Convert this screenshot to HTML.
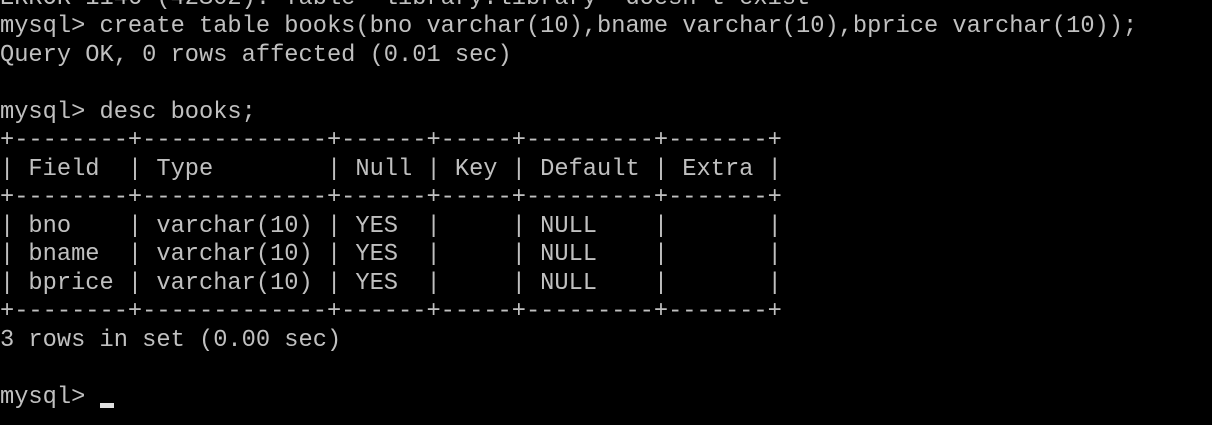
<!DOCTYPE html>
<html><head><meta charset="utf-8"><style>
html,body{margin:0;padding:0;background:#000;width:1212px;height:425px;overflow:hidden}
pre{position:absolute;left:0;top:-15.5px;margin:0;font-family:"Liberation Mono",monospace;font-size:23.7px;line-height:28.5px;color:#c0c0c0;white-space:pre}
.cur{position:absolute;left:100px;top:403px;width:14px;height:5px;background:#e0e0e0}
</style></head><body>
<pre>ERROR 1146 (42S02): Table 'library.library' doesn't exist
mysql> create table books(bno varchar(10),bname varchar(10),bprice varchar(10));
Query OK, 0 rows affected (0.01 sec)

mysql> desc books;
+--------+-------------+------+-----+---------+-------+
| Field  | Type        | Null | Key | Default | Extra |
+--------+-------------+------+-----+---------+-------+
| bno    | varchar(10) | YES  |     | NULL    |       |
| bname  | varchar(10) | YES  |     | NULL    |       |
| bprice | varchar(10) | YES  |     | NULL    |       |
+--------+-------------+------+-----+---------+-------+
3 rows in set (0.00 sec)

mysql> </pre>
<div class="cur"></div>
</body></html>
